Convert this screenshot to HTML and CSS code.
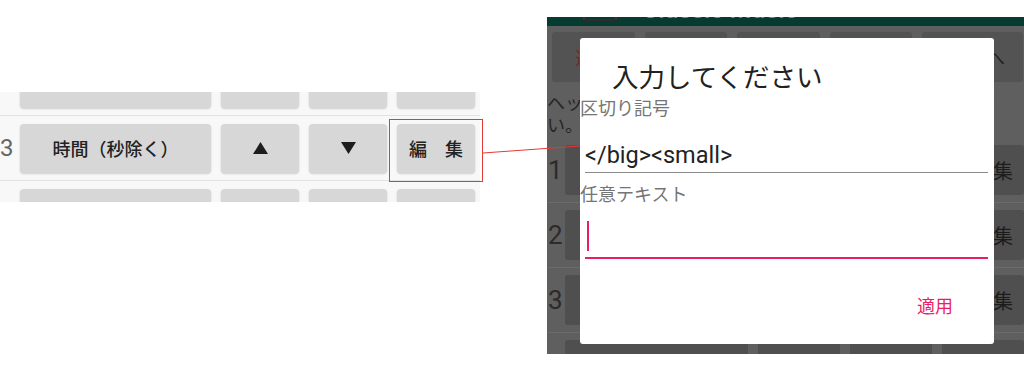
FILE: index.html
```html
<!DOCTYPE html>
<html lang="ja">
<head>
    <meta charset="UTF-8">
    <meta name="viewport" content="width=device-width, initial-scale=1.0">
    <title>区切り記号の設定</title>
    <link rel="stylesheet" href="styles.css">
</head>
<body>

    <!-- Cropped list from the settings screen -->
    <div class="crop-list">
        <div class="rows">
            <div class="row">
                <span class="num"></span>
                <div class="btn wide"></div>
                <div class="btn"></div>
                <div class="btn"></div>
                <div class="btn"></div>
            </div>
            <div class="row">
                <span class="num">3</span>
                <div class="btn wide">時間（秒除く）</div>
                <div class="btn">
                    <svg width="15" height="12" viewBox="0 0 15 12"><polygon points="7.5,0 15,12 0,12" fill="#1d1d1d"/></svg>
                </div>
                <div class="btn">
                    <svg width="15" height="12" viewBox="0 0 15 12"><polygon points="0,0 15,0 7.5,12" fill="#1d1d1d"/></svg>
                </div>
                <div class="btn">編　集</div>
            </div>
            <div class="row">
                <span class="num"></span>
                <div class="btn wide"></div>
                <div class="btn"></div>
                <div class="btn"></div>
                <div class="btn"></div>
            </div>
        </div>
    </div>

    <!-- Phone screenshot with the dialog open -->
    <div class="phone">
        <div class="appbar">
            <div class="app-icon"></div>
            <div class="app-title">Classic Music</div>
        </div>
        <div class="tabs">
            <div class="tab red">選曲</div>
            <div class="tab"></div>
            <div class="tab"></div>
            <div class="tab"></div>
            <div class="tab end">一覧へ</div>
        </div>
        <div class="desc">ヘッダーに表示する項目と区切り記号を設定してくださ<br>い。</div>
        <div class="prow">
            <span class="pnum">1</span>
            <div class="pbtn wide"></div>
            <div class="pbtn"></div>
            <div class="pbtn"></div>
            <div class="pbtn">編　集</div>
        </div>
        <div class="prow">
            <span class="pnum">2</span>
            <div class="pbtn wide"></div>
            <div class="pbtn"></div>
            <div class="pbtn"></div>
            <div class="pbtn">編　集</div>
        </div>
        <div class="prow">
            <span class="pnum">3</span>
            <div class="pbtn wide"></div>
            <div class="pbtn"></div>
            <div class="pbtn"></div>
            <div class="pbtn">編　集</div>
        </div>
        <div class="prow">
            <span class="pnum"></span>
            <div class="pbtn wide"></div>
            <div class="pbtn"></div>
            <div class="pbtn"></div>
            <div class="pbtn"></div>
        </div>

        <div class="dialog">
            <div class="dlg-title">入力してください</div>
            <div class="dlg-label">区切り記号</div>
            <div class="field">&lt;/big&gt;&lt;small&gt;</div>
            <div class="dlg-label second">任意テキスト</div>
            <div class="field active"><span class="caret"></span></div>
            <div class="dlg-actions">
                <span class="dlg-btn">適用</span>
            </div>
        </div>
    </div>

    <!-- Callout annotation -->
    <div class="callout"></div>
    <svg class="callout-line" width="97" height="9" viewBox="0 0 97 9">
        <line x1="0" y1="8" x2="97" y2="1" stroke="#e53935" stroke-width="1"/>
    </svg>

</body>
</html>
```

FILE: styles.css
```css
/* General */
* {
    box-sizing: border-box;
}

body {
    margin: 0;
    width: 1024px;
    height: 376px;
    overflow: hidden;
    background: #fff;
    font-family: Roboto, "Noto Sans CJK JP", sans-serif;
    position: relative;
    display: flex;
    align-items: flex-start;
}

/* Left: cropped settings list */
.crop-list {
    flex: none;
    width: 480px;
    height: 110px;
    margin-top: 92px;
    overflow: hidden;
    background: #f8f8f8;
}

.rows {
    margin-top: -41px;
}

.row {
    display: flex;
    align-items: center;
    gap: 10px;
    height: 65px;
    border-bottom: 1px solid #e2e2e2;
}

.num {
    width: 20px;
    margin-right: -10px;
    padding-right: 7px;
    text-align: right;
    font-size: 24px;
    color: #666;
}

.btn {
    width: 78px;
    height: 49px;
    display: flex;
    align-items: center;
    justify-content: center;
    background: #d7d7d7;
    border-radius: 4px;
    box-shadow: 0 1px 2px rgba(0, 0, 0, 0.18);
    font-size: 18px;
    font-weight: 500;
    color: #222;
}

.btn.wide {
    width: 191px;
}

/* Right: phone screenshot */
.phone {
    flex: none;
    position: relative;
    width: 477px;
    height: 337px;
    margin: 17px 0 0 67px;
    overflow: hidden;
    background: #5f5f5f;
}

.appbar {
    display: flex;
    height: 9px;
    overflow: hidden;
    background: #063b31;
}

.app-icon {
    width: 34px;
    height: 20px;
    margin: -16px 0 0 36px;
    border: 2px solid #6e2222;
    border-bottom-color: #2e2e2e;
    border-radius: 3px;
}

.app-title {
    margin: -19px 0 0 25px;
    font-size: 25px;
    line-height: 24px;
    font-weight: 500;
    color: #7f8d89;
}

.tabs {
    display: flex;
    gap: 10px;
    padding: 6px 1px 6px 5px;
}

.tab {
    flex: 1;
    height: 50px;
    display: flex;
    align-items: center;
    justify-content: center;
    background: #535353;
    border-radius: 3px;
    font-size: 18px;
    color: #222;
}

.tab.red {
    color: #7f2323;
}

.tab.end {
    justify-content: flex-end;
    padding-right: 18px;
}

.desc {
    padding-top: 5px;
    margin-bottom: 1px;
    font-size: 18px;
    line-height: 22px;
    color: #262626;
    white-space: nowrap;
}

.prow {
    display: flex;
    align-items: center;
    gap: 10px;
    height: 65px;
    border-bottom: 1px solid #6b6b6b;
}

.pnum {
    width: 20px;
    margin-right: -10px;
    padding-left: 1px;
    font-size: 26px;
    color: #2b2b2b;
}

.pbtn {
    flex: none;
    width: 82px;
    height: 50px;
    display: flex;
    align-items: center;
    justify-content: center;
    background: #4f4f4f;
    border-radius: 3px;
    font-size: 20px;
    color: #1c1c1c;
}

.pbtn.wide {
    width: 183px;
}

/* Dialog */
.dialog {
    position: absolute;
    left: 33px;
    top: 21px;
    width: 414px;
    height: 306px;
    padding-top: 27px;
    background: #fff;
    border-radius: 3px;
}

.dlg-title {
    margin-left: 32px;
    font-size: 26.5px;
    line-height: 26px;
    color: #212121;
}

.dlg-label {
    margin-top: 9px;
    font-size: 18px;
    line-height: 18px;
    color: #757575;
}

.dlg-label.second {
    margin-top: 13px;
}

.field {
    height: 33px;
    margin: 22px 6px 0 5px;
    border-bottom: 1px solid #8a8a8a;
    font-size: 23.5px;
    line-height: 30px;
    color: #222;
}

.field.active {
    height: 38px;
    margin-top: 17px;
    border-bottom: 2px solid #e91e63;
}

.caret {
    display: block;
    width: 2px;
    height: 30px;
    margin: 2px 0 0 2px;
    background: #e91e63;
}

.dlg-actions {
    display: flex;
    justify-content: flex-end;
    margin-top: 39px;
    padding-right: 41px;
}

.dlg-btn {
    font-size: 18px;
    line-height: 18px;
    color: #e91e63;
}

/* Annotation */
.callout {
    position: absolute;
    left: 389px;
    top: 119px;
    width: 94px;
    height: 63px;
    border: 1px solid #e53935;
}

.callout-line {
    position: absolute;
    left: 483px;
    top: 145px;
}
```
